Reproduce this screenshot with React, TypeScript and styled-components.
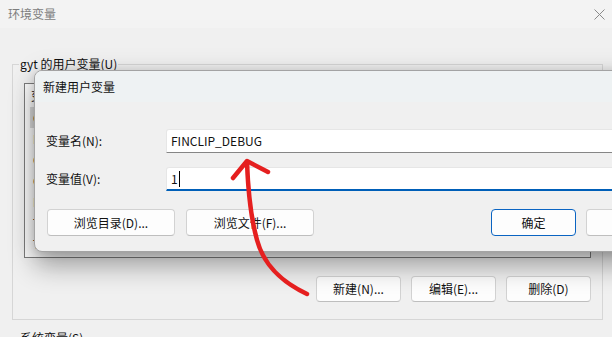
import styled, { createGlobalStyle } from 'styled-components';

const GlobalStyle = createGlobalStyle`
	html, body {
		margin: 0;
		padding: 0;
	}
	body {
		font-family: "Noto Sans CJK SC", "Noto Sans", sans-serif;
		font-size: 12px;
		color: #111;
	}
	* {
		box-sizing: border-box;
	}
`;

const Screen = styled.div`
	position: relative;
	width: 612px;
	height: 337px;
	overflow: hidden;
	background: #f0f0f0;
`;

// 背后的 "环境变量" 窗口
const EnvWindow = styled.div`
	display: flex;
	flex-direction: column;
	height: 100%;
`;

const TitleBar = styled.div`
	flex-shrink: 0;
	height: 28px;
	padding: 0 7px 0 8px;
	display: flex;
	align-items: center;
	justify-content: space-between;
	background: #f3f3f3;
	color: #7d7d7d;
	line-height: 16px;
`;

const Content = styled.div`
	padding: 28px 9px 0 12px;
`;

const GroupBox = styled.fieldset`
	margin: 0;
	padding: 11px 11px 17px 11px;
	border: 1px solid #d6d6d6;
	border-radius: 0;
`;

const Legend = styled.legend`
	margin-left: -5px;
	padding: 0 1px;
	line-height: 16px;
`;

const ListBox = styled.div`
	height: 175px;
	border: 1px solid #7c7c7c;
	background: #fbfbfb;
	overflow: hidden;
	display: flex;
	flex-direction: column;
`;

const ListHeader = styled.div`
	height: 23px;
	padding-left: 6px;
	display: flex;
	align-items: center;
	line-height: 16px;
`;

const ListRow = styled.div<{ $selected?: boolean }>`
	height: 21px;
	margin-left: 5px;
	padding-left: 3px;
	display: flex;
	align-items: center;
	white-space: nowrap;
	line-height: 16px;
	background: ${(p) => (p.$selected ? '#d9d9d9' : 'transparent')};
`;

const ButtonRow = styled.div`
	margin-top: 18px;
	display: flex;
	justify-content: flex-end;
	gap: 10px;
`;

const Button = styled.button<{ $w: number; $h?: number; $default?: boolean }>`
	width: ${(p) => p.$w}px;
	height: ${(p) => p.$h ?? 26}px;
	padding: 0;
	font-family: inherit;
	font-size: 12px;
	line-height: 16px;
	color: #111;
	background: #fdfdfd;
	border: 1px solid ${(p) => (p.$default ? '#0a64c2' : '#d2d2d2')};
	border-bottom-color: ${(p) => (p.$default ? '#0a64c2' : '#bebebe')};
	border-radius: 4px;
`;

const SectionLabel = styled.div`
	margin: 10px 0 0 8px;
	line-height: 16px;
`;

// 前面的 "新建用户变量" 对话框
const Dialog = styled.div`
	position: absolute;
	left: 34px;
	top: 70px;
	width: 650px;
	height: 182px;
	border: 1px solid #a3a3a3;
	border-radius: 8px;
	background: #f0f0f0;
	overflow: hidden;
	display: flex;
	flex-direction: column;
	box-shadow: 0 15px 26px rgba(0, 0, 0, 0.3), 0 2px 8px rgba(0, 0, 0, 0.12),
		0 0 26px rgba(0, 0, 0, 0.1);
`;

const DialogTitle = styled.div`
	height: 31px;
	flex-shrink: 0;
	padding-left: 8px;
	display: flex;
	align-items: center;
	background: #eef2f3;
	line-height: 16px;
`;

const DialogBody = styled.div`
	padding: 27px 12px 0 11px;
	display: flex;
	flex-direction: column;
`;

const FieldRow = styled.div<{ $gap?: number }>`
	display: grid;
	grid-template-columns: 120px 1fr;
	align-items: center;
	margin-top: ${(p) => p.$gap ?? 0}px;
`;

const FieldLabel = styled.label`
	line-height: 16px;
`;

const TextBox = styled.div<{ $focused?: boolean }>`
	height: 24px;
	padding-left: 4px;
	display: flex;
	align-items: center;
	background: #fff;
	border: 1px solid #e6e6e6;
	border-bottom: ${(p) => (p.$focused ? '2px solid #005fb8' : '1px solid #868686')};
	border-radius: 3px 3px 0 0;
	line-height: 16px;
`;

const Caret = styled.span`
	display: inline-block;
	width: 1px;
	height: 16px;
	margin-left: 1px;
	background: #000;
`;

const DialogButtons = styled.div`
	margin-top: 18px;
	display: flex;
	justify-content: space-between;
`;

const ButtonGroup = styled.div<{ $gap: number; $offset?: number }>`
	display: flex;
	gap: ${(p) => p.$gap}px;
	margin-left: ${(p) => p.$offset ?? 0}px;
`;

const ArrowLayer = styled.svg`
	position: absolute;
	left: 0;
	top: 0;
	pointer-events: none;
`;

const rows = [
	'ChocolateyLastPathUpdate',
	'FINCLIP_SDK_HOME',
	'OneDrive',
	'OneDriveConsumer',
	'Path',
	'TEMP',
	'TMP',
];

export default function App() {
	return (
		<>
			<GlobalStyle />
			<Screen>
				<EnvWindow>
					<TitleBar>
						<span>环境变量</span>
						<svg width="11" height="11" viewBox="0 0 11 11">
							<path d="M0.5 0.5 L10.5 10.5 M10.5 0.5 L0.5 10.5" stroke="#8a8a8a" strokeWidth="1" />
						</svg>
					</TitleBar>
					<Content>
						<GroupBox>
							<Legend>gyt 的用户变量(U)</Legend>
							<ListBox>
								<ListHeader>变量</ListHeader>
								{rows.map((name, i) => (
									<ListRow key={name} $selected={i === 0}>
										{name}
									</ListRow>
								))}
							</ListBox>
							<ButtonRow>
								<Button $w={85}>新建(N)...</Button>
								<Button $w={85}>编辑(E)...</Button>
								<Button $w={85}>删除(D)</Button>
							</ButtonRow>
						</GroupBox>
						<SectionLabel>系统变量(S)</SectionLabel>
					</Content>
				</EnvWindow>

				<Dialog>
					<DialogTitle>新建用户变量</DialogTitle>
					<DialogBody>
						<FieldRow>
							<FieldLabel>变量名(N):</FieldLabel>
							<TextBox>FINCLIP_DEBUG</TextBox>
						</FieldRow>
						<FieldRow $gap={14}>
							<FieldLabel>变量值(V):</FieldLabel>
							<TextBox $focused>
								1<Caret />
							</TextBox>
						</FieldRow>
						<DialogButtons>
							<ButtonGroup $gap={11} $offset={1}>
								<Button $w={128} $h={27}>浏览目录(D)...</Button>
								<Button $w={128} $h={27}>浏览文件(F)...</Button>
							</ButtonGroup>
							<ButtonGroup $gap={10}>
								<Button $w={85} $h={27} $default>
									确定
								</Button>
								<Button $w={85} $h={27}>
									取消
								</Button>
							</ButtonGroup>
						</DialogButtons>
					</DialogBody>
				</Dialog>

				<ArrowLayer width="612" height="337" viewBox="0 0 612 337">
					<path
						d="M307 294 C 282 282, 264 266, 257 240 C 250 215, 248 190, 247 162"
						fill="none"
						stroke="#e51f1f"
						strokeWidth="4.5"
						strokeLinecap="round"
					/>
					<path
						d="M233 178 L247 161 L268 172"
						fill="none"
						stroke="#e51f1f"
						strokeWidth="4.5"
						strokeLinecap="round"
						strokeLinejoin="round"
					/>
				</ArrowLayer>
			</Screen>
		</>
	);
}
